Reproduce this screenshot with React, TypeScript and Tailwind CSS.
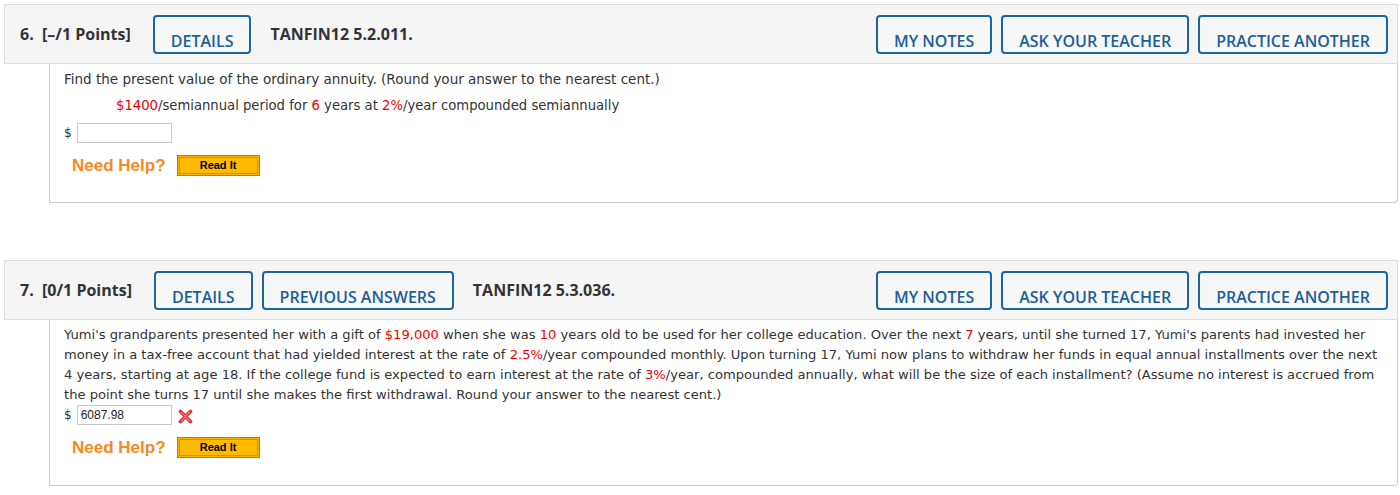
import React from 'react';

const openSans = { fontFamily: '"Open Sans", sans-serif' };

const HeadButton = ({ label }: { label: string }) => (
  <div className="h-[39px] flex items-end justify-center border-2 border-[#1b65a6] rounded-[4px] px-[16px] pb-[3px] text-[16px] leading-none font-semibold text-[#1d5f99] bg-[#f7f7f7] whitespace-nowrap">
    {label}
  </div>
);

const Header = ({ num, points, buttons, code }: { num: string; points: string; buttons: string[]; code: string }) => (
  <div
    className="flex items-center h-[60px] border border-[#dddddd] bg-[#f5f5f5] pl-[15px] pr-[9px] text-[#333]"
    style={openSans}
  >
    <span className="font-bold text-[16px] whitespace-nowrap">{num}&nbsp;&nbsp;{points}</span>
    <div className="flex gap-[9px] ml-[22px]">
      {buttons.map((b) => (
        <HeadButton key={b} label={b} />
      ))}
    </div>
    <span className="ml-[19px] font-bold text-[16px] whitespace-nowrap">{code}</span>
    <div className="ml-auto flex gap-[9px]">
      <HeadButton label="MY NOTES" />
      <HeadButton label="ASK YOUR TEACHER" />
      <HeadButton label="PRACTICE ANOTHER" />
    </div>
  </div>
);

const Red = ({ children }: { children: React.ReactNode }) => <span className="text-[#ee0000]">{children}</span>;

const NeedHelp = () => (
  <div className="flex items-center pl-[8px] font-['Liberation_Sans',Arial,sans-serif]">
    <span className="text-[17px] text-[#f68a1e] font-bold">Need Help?</span>
    <div className="ml-[11px] w-[83px] h-[21px] border border-[#c07710] bg-[#ffb100] p-[1px]">
      <div className="h-full border border-[#d98900] bg-[#ffbb00] flex items-center justify-center text-[11px] font-bold text-black leading-none">
        Read It
      </div>
    </div>
  </div>
);

const AnswerRow = ({ value, wrong }: { value?: string; wrong?: boolean }) => (
  <div className="flex items-center gap-[5px]">
    <span className="text-[12px] text-[#333]">$</span>
    <div className="w-[95px] h-[20px] border border-[#c8c8c8] bg-white px-[3px] flex items-center text-[12px] text-[#222] font-['Liberation_Sans',Arial,sans-serif]">
      {value}
    </div>
    {wrong && (
      <svg width="15" height="15" viewBox="0 0 15 15" className="ml-[1px] mt-[2px]">
        <path d="M2.5 2.5 L12.5 12.5 M12.5 2.5 L2.5 12.5" stroke="#e8262f" strokeWidth="3.6" strokeLinecap="round" />
        <path d="M3 3 L12 12 M12 3 L3 12" stroke="#ff6f77" strokeWidth="1.2" strokeLinecap="round" />
      </svg>
    )}
  </div>
);

export default function App() {
  return (
    <div className="bg-white min-h-[495px] pl-[4px] pr-[2px] pt-[4px] text-[#333] font-['DejaVu_Sans',Verdana,sans-serif]">
      {/* question 6 */}
      <Header num="6." points="[–/1 Points]" buttons={['DETAILS']} code="TANFIN12 5.2.011." />
      <div className="ml-[45px] h-[139px] border-x border-b border-[#cccccc] rounded-br-[4px] pl-[14px] pt-[7px]">
        <p className="text-[13.5px] leading-[17px]">Find the present value of the ordinary annuity. (Round your answer to the nearest cent.)</p>
        <p className="text-[13.2px] leading-[17px] mt-[9px] pl-[52px]">
          <Red>$1400</Red>/semiannual period for <Red>6</Red> years at <Red>2%</Red>/year compounded semiannually
        </p>
        <div className="mt-[9px]">
          <AnswerRow />
        </div>
        <div className="mt-[10px]">
          <NeedHelp />
        </div>
      </div>

      {/* question 7 */}
      <div className="mt-[57px]">
        <Header num="7." points="[0/1 Points]" buttons={['DETAILS', 'PREVIOUS ANSWERS']} code="TANFIN12 5.3.036." />
        <div className="ml-[45px] h-[166px] border-x border-b border-[#cccccc] rounded-br-[4px] pl-[14px] pt-[5px]">
          <p className="text-[13.1px] leading-[20px] whitespace-nowrap">
            Yumi's grandparents presented her with a gift of <Red>$19,000</Red> when she was <Red>10</Red> years old to be used for her college education. Over the next <Red>7</Red> years, until she turned 17, Yumi's parents had invested her
            <br />
            money in a tax-free account that had yielded interest at the rate of <Red>2.5%</Red>/year compounded monthly. Upon turning 17, Yumi now plans to withdraw her funds in equal annual installments over the next
            <br />
            4 years, starting at age 18. If the college fund is expected to earn interest at the rate of <Red>3%</Red>/year, compounded annually, what will be the size of each installment? (Assume no interest is accrued from
            <br />
            the point she turns 17 until she makes the first withdrawal. Round your answer to the nearest cent.)
          </p>
          <AnswerRow value="6087.98" wrong />
          <div className="mt-[10px]">
            <NeedHelp />
          </div>
        </div>
      </div>
    </div>
  );
}
